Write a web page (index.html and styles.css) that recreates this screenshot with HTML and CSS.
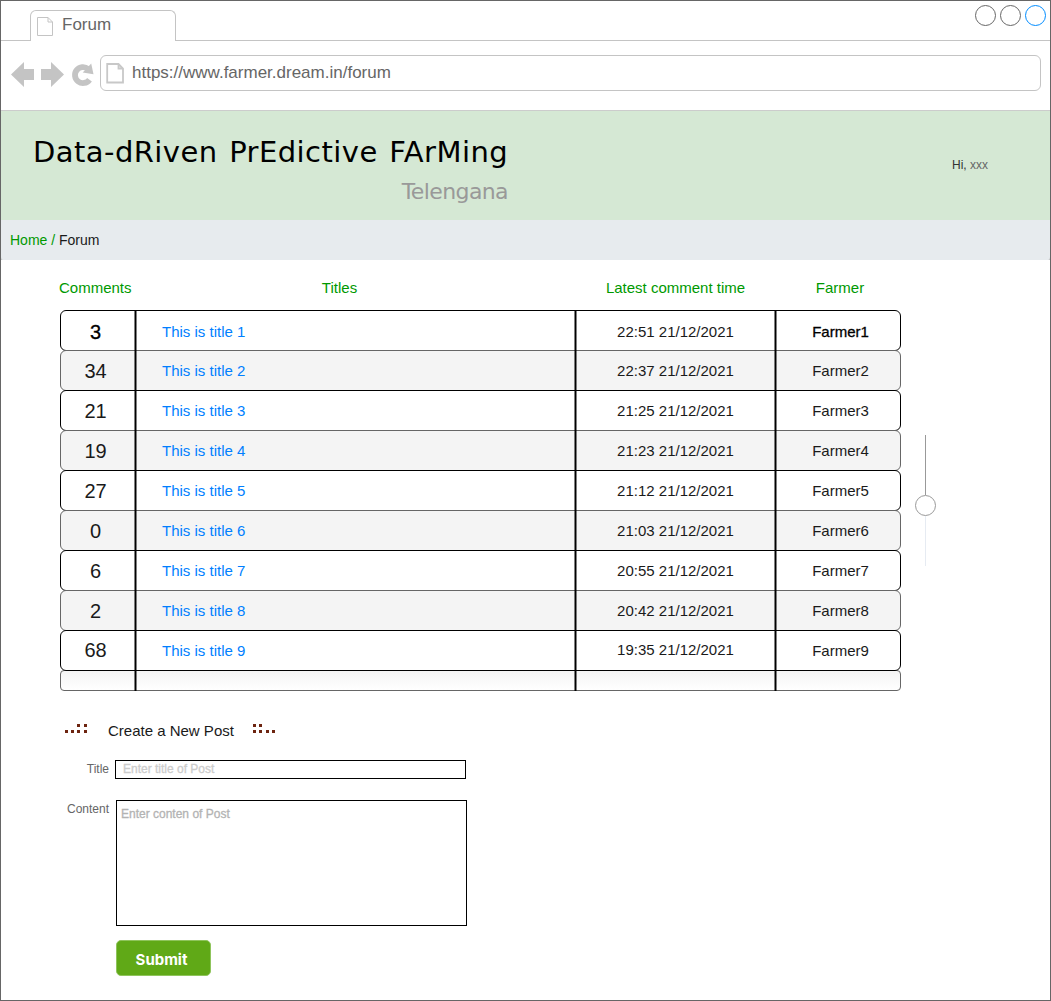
FILE: index.html
```html
<!DOCTYPE html>
<html lang="en">
<head>
<meta charset="utf-8">
<title>Forum</title>
<link rel="stylesheet" href="styles.css">
</head>
<body>
<div class="window">
  <div class="tabbar">
    <div class="tab">
      <svg class="tab-icon" width="16" height="19" viewBox="0 0 16 19"><path d="M.5.5H11L15.500 5V18.500H.5ZM11 .5V5H15.500" fill="none" stroke="#c4c4c4"/></svg>
      <span>Forum</span>
    </div>
    <svg class="controls" width="72" height="22" viewBox="0 0 72 22" fill="#fff"><circle cx="10.500" cy="10.500" r="10" stroke="#666"/><circle cx="35.500" cy="10.500" r="10" stroke="#666"/><circle cx="60.500" cy="10.500" r="10" stroke="#008cff"/></svg>
  </div>
  <div class="toolbar">
    <svg class="nav" width="84" height="28" viewBox="11 61 84 28"><path fill="#c4c4c4" d="M11 74.500L24 62V69H34V80H24V87ZM64 74.500L51 62V69H41V80H51V87Z"/><path d="M89.500 79.700A8 8 0 1 1 88.100 68.900" fill="none" stroke="#c4c4c4" stroke-width="5.800"/><path fill="#c4c4c4" d="M91.200 63.500L93.500 74.200L82.700 72.400Z"/></svg>
    <div class="url">
      <svg width="19" height="21" viewBox="0 0 19 21"><path d="M1.200 1H12.500L17 5.500V19.500H1.200ZM12.500 1V5.500H17" fill="none" stroke="#c8c8c8" stroke-width="1.800"/></svg>
      <span>https://www.farmer.dream.in/forum</span>
    </div>
  </div>
  <header class="banner">
    <div class="brand"><h1>Data-dRiven PrEdictive FArMing</h1><p>Telengana</p></div>
    <span class="user">Hi, <i>xxx</i></span>
  </header>
  <nav class="crumbs"><a>Home /</a> Forum</nav>
  <main>
    <div class="forum">
      <div class="listing">
        <div class="head"><span>Comments</span><span>Titles</span><span>Latest comment time</span><span>Farmer</span></div>
        <div class="rows">
          <div class="row first"><b>3</b><a>This is title 1</a><time>22:51 21/12/2021</time><span>Farmer1</span></div>
          <div class="row alt"><b>34</b><a>This is title 2</a><time>22:37 21/12/2021</time><span>Farmer2</span></div>
          <div class="row"><b>21</b><a>This is title 3</a><time>21:25 21/12/2021</time><span>Farmer3</span></div>
          <div class="row alt"><b>19</b><a>This is title 4</a><time>21:23 21/12/2021</time><span>Farmer4</span></div>
          <div class="row"><b>27</b><a>This is title 5</a><time>21:12 21/12/2021</time><span>Farmer5</span></div>
          <div class="row alt"><b>0</b><a>This is title 6</a><time>21:03 21/12/2021</time><span>Farmer6</span></div>
          <div class="row"><b>6</b><a>This is title 7</a><time>20:55 21/12/2021</time><span>Farmer7</span></div>
          <div class="row alt"><b>2</b><a>This is title 8</a><time>20:42 21/12/2021</time><span>Farmer8</span></div>
          <div class="row ninth"><b>68</b><a>This is title 9</a><time>19:35 21/12/2021</time><span>Farmer9</span></div>
          <div class="row stub"></div>
          <i class="rule rule-a"></i><i class="rule rule-b"></i><i class="rule rule-c"></i>
        </div>
      </div>
      <svg class="slider" width="22" height="132" viewBox="0 0 22 132"><path d="M10.500 0V60" stroke="#999"/><path d="M10.500 81V131" stroke="#e6ebf2"/><circle cx="10.500" cy="70.500" r="10" fill="#fff" stroke="#999"/></svg>
    </div>
    <section class="post">
      <div class="post-title">
        <svg width="23" height="10" viewBox="0 0 23 10" fill="#6d2410"><path d="M0 6h3v3H0zM6 6h3v3H6zM12 6h3v3h-3zM19 6h3v3h-3zM12 0h3v3h-3zM19 0h3v3h-3z"/></svg>
        <h2>Create a New Post</h2>
        <svg width="23" height="10" viewBox="0 0 23 10" fill="#6d2410"><path d="M0 6h3v3H0zM6 6h3v3H6zM13 6h3v3h-3zM19 6h3v3h-3zM0 0h3v3H0zM6 0h3v3H6z"/></svg>
      </div>
      <div class="field"><label>Title</label><div class="input">Enter title of Post</div></div>
      <div class="field content"><label>Content</label><div class="area">Enter conten of Post</div></div>
      <button class="submit">Submit</button>
    </section>
  </main>
</div>
</body>
</html>
```
FILE: styles.css
```css
* { box-sizing: border-box; margin: 0; padding: 0; }
body { background: #fff; font-family: "Liberation Sans", Arial, sans-serif; color: #1a1a1a; }
svg { display: block; flex: none; }
.window { width: 1051px; height: 1001px; border: 1px solid #666; overflow: hidden; }
.tabbar { height: 40px; border-bottom: 1px solid #c4c4c4; display: flex; justify-content: space-between; padding: 0 3px 0 29px; }
.tab { margin-top: 9px; width: 146px; height: 31px; border: 1px solid #c4c4c4; border-bottom: 0; border-radius: 6px 6px 0 0; background: #fff; display: flex; padding: 6px 0 0 6px; font-size: 17px; line-height: 20px; color: #666; }
.tab span { margin: -2px 0 0 9px; }
.controls { margin-top: 4px; }
.toolbar { height: 69px; display: flex; padding: 14px 9px 0 10px; }
.nav { margin: 6px 5px 0 0; }
.url { width: 941px; height: 36px; border: 1px solid #c4c4c4; border-radius: 6px; display: flex; padding: 7px 0 0 5px; color: #666; font-size: 17px; line-height: 20px; }
.url span { margin: 0 0 0 7px; }
.banner { height: 110px; margin: 0 -1px; border-top: 1px solid #ccc; border-left: 1px solid #9da79d; border-right: 1px solid #9da79d; background: #d5e8d4; display: flex; justify-content: space-between; padding: 0 62px 0 32px; }
.brand { width: 475px; text-align: right; font-family: "DejaVu Sans", Verdana, sans-serif; white-space: nowrap; }
.brand h1 { font-size: 29px; font-weight: 400; line-height: 36px; margin-top: 23px; letter-spacing: .44px; word-spacing: 2px; color: #000; }
.brand p { font-size: 22px; line-height: 28px; margin-top: 8px; letter-spacing: -.6px; color: #999; }
.user { font-size: 12px; line-height: 16px; margin-top: 46px; color: #333; }
.user i { font-style: normal; color: #666; }
.crumbs { height: 40px; margin: 0 -1px; border-left: 1px solid #a9abac; border-right: 1px solid #a9abac; background: #e7ebee; padding: 10px 9px; font-size: 14px; line-height: 20px; border-radius: 0 0 3px 3px; }
.crumbs a, .head { color: #090; }
main { padding-left: 59px; }
.forum { display: flex; gap: 14px; }
.listing { width: 841px; }
.head { height: 50px; padding-top: 18px; line-height: 20px; font-size: 15px; display: grid; grid-template-columns: 71px 417px 255px 74px; text-align: center; white-space: nowrap; }
.head span:first-child { margin-left: -1px; }
.rows { position: relative; font-size: 15px; }
.row { position: relative; height: 41px; margin-bottom: -1px; border: 1px solid #000; border-radius: 6px; background: #fff; display: grid; grid-template-columns: 69px 446px 199px 1fr; padding: 10px 0 0; line-height: 20px; text-align: center; }
.row b { font-size: 20px; font-weight: 400; }
.row a { color: #007fff; text-align: left; padding-left: 32px; }
.row span { padding-left: 6px; }
.alt { border-color: #666; background: #f4f4f4; }
.first { padding-top: 11px; }
.first b, .first span { color: #000; -webkit-text-stroke: .3px #000; }
.ninth { z-index: 1; }
.ninth b, .ninth time { margin-top: -1px; }
.stub { height: 21px; border-color: #666; border-radius: 4px; background: linear-gradient(#f4f4f4, #fff); margin: 0; }
.rule { position: absolute; z-index: 2; top: 0; bottom: 0; width: 3px; background: linear-gradient(90deg, rgba(0,0,0,.5) 1px, #000 1px 2px, rgba(0,0,0,.5) 2px); }
.rule-a { left: 74px; }
.rule-b { left: 514px; }
.rule-c { left: 714px; }
.slider { margin-top: 175px; }
.post { width: 407px; }
.post-title { display: flex; padding: 33px 0 0 5px; height: 69px; }
.post-title h2 { font-size: 15px; font-weight: 400; line-height: 20px; margin: -3px 19px 0 20px; white-space: nowrap; }
.field { display: flex; gap: 6px; font-size: 12px; line-height: 16px; height: 40px; }
.field label { width: 49px; text-align: right; color: #666; padding-top: 1px; }
.input { width: 351px; height: 19px; border: 1px solid #000; padding-left: 7px; color: #ccc; -webkit-text-stroke: .3px #ccc; }
.content { height: 140px; gap: 7px; }
.area { width: 351px; height: 126px; border: 1px solid #000; padding: 5px 4px; color: #b3b3b3; -webkit-text-stroke: .3px #b3b3b3; }
.submit { display: block; margin-left: 56px; width: 95px; height: 36px; border: 1px solid #8fc45c; border-radius: 5px; background: #60a917; color: #fff; font: 700 15px/34px Inter, sans-serif; padding: 2px 4px 0 0; }
```
